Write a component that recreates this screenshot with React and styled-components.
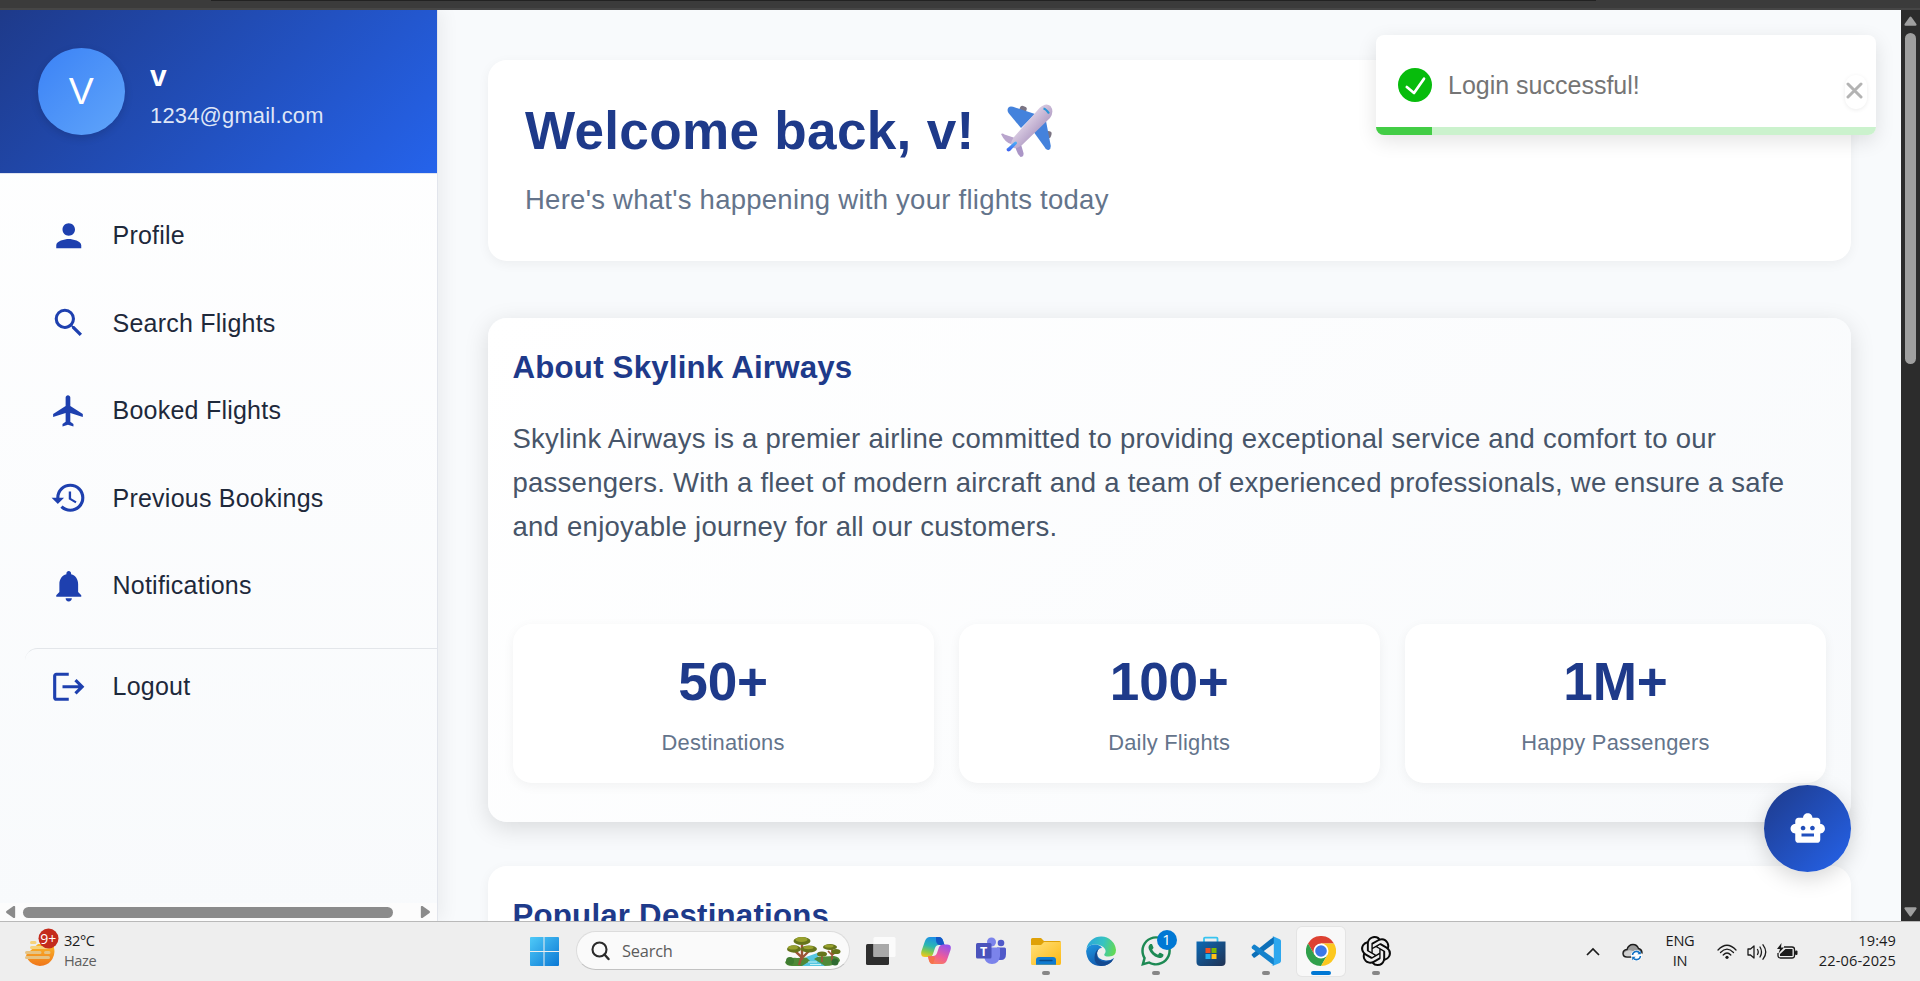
import React from "react";
import styled, { createGlobalStyle } from "styled-components";
import { MdPerson, MdSearch, MdHistory, MdNotifications, MdSmartToy } from "react-icons/md";
import { FaWhatsapp } from "react-icons/fa";

const Global = createGlobalStyle`
  *, *::before, *::after { box-sizing: border-box; }
  body { margin: 0; overflow: hidden; font-family: "Liberation Sans", Arial, sans-serif; }
  h1, h2, p { margin: 0; }
  svg { display: block; flex: none; }
`;

const Screen = styled.div`
  display: flex;
  flex-direction: column;
  width: 1920px;
  height: 981px;
  overflow: hidden;
  position: relative;
`;

const BrowserEdge = styled.div`
  height: 10px;
  flex: none;
  background: linear-gradient(#3b3b3b 0 8px, #464646 8px);
  &::before {
    content: "";
    display: block;
    width: 1385px;
    height: 1px;
    margin-left: 211px;
    background: #222;
  }
`;

const Page = styled.div`
  display: flex;
  height: 911px;
  flex: none;
  overflow: hidden;
  background: #f8fafc;
`;

/* ---------- sidebar ---------- */

const Sidebar = styled.aside`
  width: 438px;
  flex: none;
  display: flex;
  flex-direction: column;
  border-right: 1px solid #e2e5ec;
  background: linear-gradient(180deg, #ffffff 0%, #f8fafc 100%);
  box-shadow: 6px 0 16px rgba(0, 0, 0, 0.05);
  overflow: hidden;
  clip-path: inset(0 -30px 0 0);
`;

const UserHeader = styled.div`
  display: flex;
  align-items: center;
  gap: 25px;
  height: 163.5px;
  flex: none;
  padding: 0 37.5px;
  border-bottom: 1px solid #dfe3f0;
  background: linear-gradient(135deg, #1e3a8a 0%, #2563eb 100%);
`;

const Avatar = styled.div`
  width: 87.5px;
  height: 87.5px;
  flex: none;
  border-radius: 50%;
  display: flex;
  align-items: center;
  justify-content: center;
  color: #fff;
  font-size: 37.5px;
  background: linear-gradient(135deg, #3b82f6, #60a5fa);
  box-shadow: 0 3px 9px rgba(0, 0, 0, 0.14);
`;

const UserText = styled.div`
  color: #fff;
`;

const UserName = styled.div`
  font-size: 30px;
  line-height: 48px;
  font-weight: 700;
`;

const UserMail = styled.div`
  font-size: 21.875px;
  line-height: 31.3px;
  letter-spacing: 0.01071em;
  color: #dfe6f7;
`;

const NavList = styled.nav`
  padding: 24.5px 0 0 25px;
  flex: 1;
`;

const NavItem = styled.div`
  display: flex;
  align-items: center;
  width: 430px;
  height: ${(p) => (p.$divided ? 76 : 75)}px;
  margin-top: ${(p) => (p.$divided ? 25 : 0)}px;
  margin-bottom: ${(p) => (p.$last ? 0 : 12.5)}px;
  padding-left: 25px;
  border-radius: 12.5px;
  border-top: ${(p) => (p.$divided ? "1px solid #e3e6ea" : "none")};
  color: #1e40af;
`;

const NavIcon = styled.span`
  width: 62.5px;
  flex: none;
`;

const NavLabel = styled.span`
  font-size: 25px;
  letter-spacing: 0.00938em;
  color: #1e293b;
`;

const HScroll = styled.div`
  display: flex;
  align-items: center;
  height: 18px;
  flex: none;
  padding: 0 5px 0 4px;
  background: #fcfcfc;
`;

const HThumb = styled.div`
  width: 370px;
  height: 11px;
  margin: 0 auto 0 6px;
  border-radius: 6px;
  background: #8b8b8b;
`;

/* ---------- main ---------- */

const Main = styled.main`
  flex: 1;
  padding: 50px 50px 50px 49.5px;
  display: flex;
  flex-direction: column;
`;

const WelcomeCard = styled.section`
  flex: none;
  height: 201px;
  margin-bottom: 56.5px;
  padding: 37.5px;
  border-radius: 18.75px;
  background: #fff;
  box-shadow: 0 3px 12px rgba(0, 0, 0, 0.05);
`;

const Title = styled.h1`
  display: flex;
  align-items: flex-start;
  font-size: 53.125px;
  line-height: 65.6px;
  letter-spacing: 0.3px;
  color: #1e3a8a;
  margin-bottom: 12.5px;
  svg { margin: 6px 0 0 25px; }
`;

const Subtitle = styled.p`
  font-size: 27.5px;
  line-height: 1.736;
  letter-spacing: 0.00938em;
  color: #64748b;
`;

const SectionCard = styled.section`
  flex: none;
  height: ${(p) => p.$height}px;
  margin-bottom: 43.5px;
  padding: 25px 25px 37.5px;
  border-radius: 18.75px;
  background: ${(p) => (p.$raised ? "linear-gradient(135deg, #ffffff 0%, #f8fafc 100%)" : "#fff")};
  box-shadow: ${(p) => (p.$raised ? "0 6px 24px rgba(0,0,0,0.13)" : "0 3px 12px rgba(0,0,0,0.05)")};
`;

const SectionTitle = styled.h2`
  font-size: 31.25px;
  line-height: 50px;
  letter-spacing: 0.2px;
  color: #1e3a8a;
`;

const Body = styled.p`
  margin: 24.5px 0 75px;
  font-size: 27.5px;
  line-height: 44px;
  letter-spacing: 0.00938em;
  color: #475569;
`;

const Stats = styled.div`
  display: grid;
  grid-template-columns: repeat(3, 1fr);
  gap: 25px;
`;

const Stat = styled.div`
  height: 159.4px;
  padding: 25px;
  text-align: center;
  border-radius: 18.75px;
  background: #fff;
  box-shadow: 0 3px 12px rgba(0, 0, 0, 0.05);
`;

const StatValue = styled.div`
  font-size: 53.125px;
  line-height: 65.6px;
  letter-spacing: -0.2px;
  font-weight: 700;
  color: #1e3a8a;
  margin-bottom: 12.5px;
`;

const StatLabel = styled.div`
  font-size: 21.875px;
  line-height: 31.3px;
  letter-spacing: 0.01071em;
  color: #64748b;
`;

const VScroll = styled.div`
  width: 19px;
  flex: none;
  display: flex;
  flex-direction: column;
  align-items: center;
  padding: 6px 0 4px;
  background: #2c2c2c;
`;

const VThumb = styled.div`
  width: 11px;
  height: 331px;
  margin: 7px 0 auto;
  border-radius: 6px;
  background: #9f9f9f;
`;

/* ---------- overlays ---------- */

const Toast = styled.div`
  position: absolute;
  left: 1376px;
  top: 35px;
  width: 500px;
  height: 100px;
  display: flex;
  flex-direction: column;
  border-radius: 8px;
  background: #fff;
  box-shadow: 0 6px 20px rgba(0, 0, 0, 0.11);
  overflow: hidden;
`;

const ToastRow = styled.div`
  flex: 1;
  display: flex;
  align-items: center;
  gap: 16px;
  padding: 8px 9px 0 22px;
  font-size: 25px;
  color: #757575;
`;

const CloseButton = styled.span`
  width: 22px;
  height: 34px;
  margin: 14px 0 0 auto;
  display: flex;
  align-items: center;
  padding: 0 0 3px 1px;
  border-radius: 11px;
  box-shadow: 0 1px 4px rgba(0, 0, 0, 0.08);
`;

const ToastProgress = styled.div`
  height: 8px;
  background: #cbf2cd;
  &::before {
    content: "";
    display: block;
    width: 56px;
    height: 8px;
    background: #43cd46;
  }
`;

const ChatButton = styled.div`
  position: absolute;
  left: 1763.5px;
  top: 784.5px;
  width: 87.5px;
  height: 87.5px;
  border-radius: 50%;
  display: flex;
  align-items: center;
  justify-content: center;
  color: #fff;
  background: linear-gradient(135deg, #1e3a8a, #2563eb);
  box-shadow: 0 6px 22px rgba(0, 0, 0, 0.17);
`;

/* ---------- taskbar ---------- */

const Taskbar = styled.footer`
  height: 60px;
  flex: none;
  display: flex;
  align-items: stretch;
  border-top: 1px solid #b9b9b9;
  background: #eeeeee;
  color: #1b1b1b;
  font-family: "Open Sans", "Noto Sans", sans-serif;
  font-size: 14.6px;
  line-height: 20px;
`;

const Weather = styled.div`
  width: 516px;
  display: flex;
  padding: 4px 0 0 24px;
  gap: 4px;
`;

const WeatherText = styled.div`
  padding-top: 4px;
  letter-spacing: -0.4px;
  span { display: block; color: #5f5f5f; }
`;

const Slot = styled.div`
  position: relative;
  width: 55px;
  display: flex;
  justify-content: center;
  padding-top: 14px;
`;

const ActiveTile = styled(Slot)`
  width: 48px;
  height: 49px;
  margin: 5px 3.5px 0;
  padding-top: 9px;
  border-radius: 5px;
  background: #f8f8f8;
  box-shadow: 0 0 0 1px #e4e4e4;
`;

const ChatSlot = styled(Slot)`
  padding-top: 12px;
  color: #1d8a54;
`;

const Indicator = styled.span`
  position: absolute;
  bottom: ${(p) => (p.$active ? 1 : 6)}px;
  width: ${(p) => (p.$active ? 20 : 8)}px;
  height: 4px;
  border-radius: 2px;
  background: ${(p) => (p.$active ? "#0078d4" : "#868686")};
`;

const CountBadge = styled.span`
  position: absolute;
  left: 28px;
  top: 8px;
  width: 20px;
  height: 20px;
  border-radius: 50%;
  background: #0078d4;
  color: #fff;
  text-align: center;
  font-size: 15px;
  line-height: 19px;
`;

const SearchPill = styled.div`
  width: 274px;
  height: 39px;
  margin: 9px 3.5px 0 5px;
  display: flex;
  align-items: center;
  padding: 0 8px 0 14px;
  border: 1px solid #dcdcdc;
  border-bottom-color: #c2c2c2;
  border-radius: 20px;
  background: #fafafa;
  color: #5c5c5c;
  font-size: 16.4px;
  letter-spacing: -0.2px;
  span { margin: 1px auto 0 12px; }
`;

const Tray = styled.div`
  flex: 1;
  display: flex;
  align-items: center;
  justify-content: flex-end;
  padding-right: 24px;
`;

const TrayText = styled.div`
  width: ${(p) => p.$width}px;
  margin-left: ${(p) => p.$gap}px;
  padding-bottom: 4px;
  text-align: ${(p) => p.$align};
  letter-spacing: ${(p) => p.$track || 0}px;
  white-space: nowrap;
`;

const TrayIcon = styled.span`
  margin-left: ${(p) => p.$gap}px;
`;

/* ---------- drawings ---------- */

const Airplane = () => (
  <svg width="54" height="54" viewBox="0 0 54 54">
    <defs>
      <linearGradient id="fus" x1="0" y1="0" x2="1" y2="1">
        <stop offset="0.35" stopColor="#dccfe4" />
        <stop offset="0.65" stopColor="#b39fc6" />
      </linearGradient>
      <linearGradient id="tail" x1="0" y1="0" x2="0" y2="1">
        <stop offset="0" stopColor="#4cb4f8" />
        <stop offset="1" stopColor="#3d5df0" />
      </linearGradient>
    </defs>
    <rect x="20" y="2" width="7" height="6" rx="2.5" fill="#7b7483" transform="rotate(20 23 4)" />
    <rect x="46" y="27" width="5.5" height="7" rx="2.5" fill="#7b7483" transform="rotate(15 48 30)" />
    <path d="M8.5 3.4 Q10 2 13 2.8 L35 10 L21 24 L8.5 9 Q6.600 6 8.5 3.400Z" fill="#4482dc" />
    <path d="M46 17 L50.800 42 Q51 45 48.500 46 Q46 46.500 44.500 43 L33 27Z" fill="#4482dc" />
    <path d="M1 30 Q2.500 29 4.500 30.500 L15 34 L11 40 Q5 38.500 1 30Z" fill="#b9a5cd" />
    <path d="M15 42 L20 37 L23.500 49 Q24 53 20.500 53 Q17 50 15 42Z" fill="#ab96c7" />
    <path d="M39.500 4 Q46 -2 50.500 2 Q54.500 7.500 50 14 L22 41 Q15 46.500 12.500 43 Q9 40 14 33Z" fill="url(#fus)" />
    <path d="M43.500 4.500 Q46 5 49 9.500" stroke="#2794d8" strokeWidth="2.200" fill="none" />
    <path d="M14.500 38 Q17 36.500 17 39.500 L10 47 Q6.500 48.500 6.500 45Z" fill="url(#tail)" />
  </svg>
);

const PlaneIcon = () => (
  <svg width="37.5" height="37.5" viewBox="0 0 24 24" fill="currentColor">
    <path d="M21 16v-2l-8-5V3.500c0-.83-.67-1.500-1.500-1.500S10 2.670 10 3.500V9l-8 5v2l8-2.500V19l-2 1.500V22l3.500-1 3.500 1v-1.500L13 19v-5.500l8 2.500z" />
  </svg>
);

const LogoutIcon = () => (
  <svg width="37.5" height="37.5" viewBox="0 0 24 24" fill="currentColor">
    <path d="M17 7l-1.410 1.410L18.170 11H8v2h10.170l-2.580 2.580L17 17l5-5zM4 5h8V3H4c-1.100 0-2 .9-2 2v14c0 1.100.9 2 2 2h8v-2H4z" />
  </svg>
);

const TURN = { up: 0, right: 90, down: 180, left: 270 };

const ArrowSvg = styled.svg`
  transform: rotate(${(p) => TURN[p.$dir]}deg);
`;

const Arrow = ({ dir }) => (
  <ArrowSvg $dir={dir} width="13" height="10" viewBox="0 0 13 10">
    <path
      d="M5.600 1 Q6.500 -.2 7.400 1 L12.400 8 Q13 9.800 11.400 9.800 H1.600 Q0 9.800 .6 8Z"
      fill={dir === "up" || dir === "down" ? "#9f9f9f" : "#8b8b8b"}
    />
  </ArrowSvg>
);

const CheckMark = () => (
  <svg width="34" height="34" viewBox="0 0 34 34">
    <circle cx="17" cy="17" r="17" fill="#07bc0c" />
    <path d="M8.800 19 L16 25 L26 10.700" fill="none" stroke="#fff" strokeWidth="2.700" strokeLinecap="round" strokeLinejoin="round" />
  </svg>
);

const Cross = () => (
  <svg width="17" height="17" viewBox="0 0 17 17">
    <path d="M2 2 L15 15 M15 2 L2 15" stroke="#b3b3b3" strokeWidth="3" strokeLinecap="round" />
  </svg>
);

const WeatherIcon = () => (
  <svg width="36" height="40" viewBox="0 0 36 40">
    <defs>
      <linearGradient id="sun" x1="0" y1="0" x2="0" y2="1">
        <stop offset="0" stopColor="#fbb829" />
        <stop offset="1" stopColor="#f0761a" />
      </linearGradient>
    </defs>
    <path d="M2 29 A14 14 0 0 0 30 22 V18 H14 L6 25Z" fill="url(#sun)" />
    <g stroke="#f6d27b" strokeWidth="3" strokeLinecap="round">
      <path d="M7.500 16.500H11M7.500 21.500H24" />
      <path d="M2.500 26.500H16M21.500 26.500H25M2.500 31.500H24.500" stroke="#e6c383" />
    </g>
    <circle cx="24.500" cy="12.500" r="10" fill="#c42b1c" />
    <text x="24.300" y="17.500" textAnchor="middle" fontSize="14" fill="#fff">9+</text>
  </svg>
);

const StartIcon = () => (
  <svg width="30" height="30" viewBox="0 0 30 30">
    <defs>
      <linearGradient id="win" x1="0" y1="0" x2="1" y2="1" gradientUnits="objectBoundingBox">
        <stop offset="0" stopColor="#4fcaf8" />
        <stop offset="1" stopColor="#0a78d4" />
      </linearGradient>
    </defs>
    <path d="M1 2a1 1 0 0 1 1-1h12.500v14H1zM15.500 1H29a1 1 0 0 1 1 1v13H15.500zM1 16h13.500v14H2a1 1 0 0 1-1-1zM15.500 16H30v13a1 1 0 0 1-1 1H15.500z" fill="url(#win)" />
  </svg>
);

const Lens = () => (
  <svg width="19" height="20" viewBox="0 0 19 20">
    <circle cx="8.500" cy="8.500" r="7" fill="none" stroke="#2a2a2a" strokeWidth="2.100" />
    <path d="M13.500 13.500 L17.500 18" stroke="#2a2a2a" strokeWidth="2.400" strokeLinecap="round" />
  </svg>
);

const Landscape = () => (
  <svg width="57" height="32" viewBox="0 0 57 32">
    <path d="M1 27 Q6 22 13 23 L50 21 Q56 22 56 26 Q52 31 40 31 H8 Q2 31 1 27Z" fill="#4f8a38" />
    <path d="M22 22 L36 17 L35 21 L30 24 L41 31 H18 L26 26Z" fill="#55c6e0" />
    <path d="M24 27 H33 M26 29.500 H37" stroke="#c2f0f5" strokeWidth="1" />
    <path d="M15 30 L17.500 22 L10 15 M18 23 L25 16 M18 25 L18 10" stroke="#9c5437" strokeWidth="2.400" fill="none" />
    <path d="M38 27 L38 20 M48 26 L48 14 M48 20 L53 16 M48 20 L44 16" stroke="#9c5437" strokeWidth="1.700" fill="none" />
    <g fill="#65741b">
      <ellipse cx="10" cy="14" rx="7" ry="3.700" />
      <ellipse cx="18" cy="6" rx="8.500" ry="4" />
      <ellipse cx="25" cy="14" rx="8" ry="3.500" />
      <ellipse cx="38" cy="19" rx="5" ry="2.600" />
      <ellipse cx="46" cy="12" rx="7" ry="3" />
      <ellipse cx="52" cy="16.500" rx="4.500" ry="2.600" />
    </g>
    <g fill="#98a12d">
      <ellipse cx="9" cy="12.500" rx="5" ry="2" />
      <ellipse cx="17.500" cy="4.500" rx="6" ry="2.500" />
      <ellipse cx="24.500" cy="12.500" rx="5" ry="1.700" />
      <ellipse cx="45" cy="11" rx="4.500" ry="1.500" />
    </g>
    <circle cx="6" cy="26" r="4" fill="#3f7c31" />
    <circle cx="51" cy="27" r="3.500" fill="#2f6a31" />
  </svg>
);

const TaskViewIcon = () => (
  <svg width="30" height="30" viewBox="0 0 30 30">
    <rect x="0" y="8" width="23" height="21" rx="1.500" fill="#2e2e2e" />
    <rect x="7.500" y="1" width="22" height="20" rx="1.500" fill="#fff" fillOpacity="0.78" />
    <rect x="7.500" y="8" width="15.500" height="13" fill="#a9a9a9" />
  </svg>
);

const CopilotIcon = () => (
  <svg width="30" height="30" viewBox="0 0 30 30">
    <defs>
      <linearGradient id="cpA" x1="0.500" y1="0" x2="0.200" y2="1">
        <stop offset="0" stopColor="#1b8ee8" />
        <stop offset="0.450" stopColor="#2bb7b0" />
        <stop offset="0.750" stopColor="#8ecb45" />
        <stop offset="1" stopColor="#f4c51c" />
      </linearGradient>
      <linearGradient id="cpB" x1="0.700" y1="0" x2="0.200" y2="1">
        <stop offset="0" stopColor="#9a52ea" />
        <stop offset="0.550" stopColor="#ee5b9a" />
        <stop offset="1" stopColor="#fb8350" />
      </linearGradient>
    </defs>
    <path d="M13 1 H18 Q21 1 22 4.500 L23.500 9 H18 Q15 9 14 12 L12 18 Q11 21 8 21 H4 Q-1 21 .5 15 L4 5 Q5.500 1 9 1Z" fill="url(#cpA)" />
    <path d="M15 1 H18 Q21 1 22 4.500 L23.500 9 H19 Q16 9 15 5Z" fill="#1458c6" />
    <path d="M17 28 H12 Q9 28 8 24.500 L7 20 H12 Q15 20 16 17 L18 11 Q19 8.500 22 8.500 H26 Q31 8.500 29.500 14 L26 24 Q24.500 28 21 28Z" fill="url(#cpB)" />
    <path d="M7 20.500 H12 Q14.500 20.500 13.500 23.500 L12 28 Q9 28 8 24.500Z" fill="#f5714b" />
  </svg>
);

const TeamsIcon = () => (
  <svg width="30" height="30" viewBox="0 0 30 30">
    <circle cx="25" cy="7" r="3.300" fill="#5059c9" />
    <circle cx="15.500" cy="6" r="4.500" fill="#7b83eb" />
    <path d="M21 11.500 H28.500 Q30 11.500 30 13 V18 Q30 24 25 24 H21Z" fill="#5059c9" />
    <path d="M8 11.500 H22.500 Q24 11.500 24 13 V20 Q23 28 16 28 Q9 28 8 20Z" fill="#7b83eb" />
    <rect x="0" y="7" width="15.500" height="15.500" rx="1.500" fill="#4b53bc" />
    <text x="7.700" y="19.500" textAnchor="middle" fontSize="12.500" fontWeight="700" fill="#fff">T</text>
  </svg>
);

const FolderIcon = () => (
  <svg width="30" height="30" viewBox="0 0 30 30">
    <defs>
      <linearGradient id="fold" x1="0" y1="0" x2="1" y2="1">
        <stop offset="0" stopColor="#ffe07a" />
        <stop offset="1" stopColor="#fdb913" />
      </linearGradient>
    </defs>
    <path d="M0 3.500 Q0 2 1.500 2 H10 L13 5 H28.500 Q30 5 30 6.500 V12 H0Z" fill="#dfa108" />
    <path d="M0 9 H10 L13 6 H30 V27 Q30 29 28.500 29 H1.500 Q0 29 0 27.500Z" fill="url(#fold)" />
    <path d="M5 28.800 V24 Q5 21 8 21 H22 Q25 21 25 24 V28.800Z" fill="#0f7bd0" />
    <path d="M9 24.500 H21" stroke="#0a4c8c" strokeWidth="1.300" strokeLinecap="round" />
  </svg>
);

const EdgeIcon = () => (
  <svg width="30" height="30" viewBox="0 0 30 30">
    <defs>
      <linearGradient id="edA" x1="0" y1="0.300" x2="1" y2="0.500">
        <stop offset="0" stopColor="#2aa5dc" />
        <stop offset="0.550" stopColor="#36c3c2" />
        <stop offset="1" stopColor="#62d955" />
      </linearGradient>
      <linearGradient id="edB" x1="0" y1="0" x2="0.500" y2="1">
        <stop offset="0" stopColor="#1e96e0" />
        <stop offset="1" stopColor="#1259ad" />
      </linearGradient>
    </defs>
    <path d="M.3 13 A15 15 0 0 1 30 14 Q30 20.500 23 20.500 Q17.500 20.500 18.300 18.200 Q20.500 16 19 13 Q16 8.500 9 8.500 Q3 8.500 .3 13Z" fill="url(#edA)" />
    <path d="M.1 15 Q1 8.500 9 8.500 Q14 8.800 16 12 Q11.500 12 11 17 Q11 24 20 24.500 Q25 24.500 28 22 Q23.500 30 15 30 Q1 29.500 .1 15Z" fill="url(#edB)" />
    <path d="M11 17 Q10.500 25 19 26 Q25 25.500 28.200 22 Q24 30 15 30 Q8 28 8.500 21 Q9 14 14 12.200 Q11.500 13.500 11 17Z" fill="#134a91" />
  </svg>
);

const StoreIcon = () => (
  <svg width="30" height="30" viewBox="0 0 30 30">
    <defs>
      <linearGradient id="store" x1="0" y1="0" x2="1" y2="1">
        <stop offset="0" stopColor="#0c69b4" />
        <stop offset="1" stopColor="#213253" />
      </linearGradient>
    </defs>
    <path d="M8 7 V2.500 Q8 1.700 9 1.700 H20.500 Q21.500 1.700 21.500 2.500 V7" fill="none" stroke="#38c4f0" strokeWidth="1.800" />
    <path d="M.5 5.500 H29.500 V26 Q29.500 30 25.500 30 H4.500 Q.5 30 .5 26Z" fill="url(#store)" />
    <rect x="9.500" y="12" width="5" height="5" fill="#f25022" />
    <rect x="15.500" y="12" width="5" height="5" fill="#7fba00" />
    <rect x="9.500" y="18" width="5" height="5" fill="#1fb1f0" />
    <rect x="15.500" y="18" width="5" height="5" fill="#ffc21a" />
  </svg>
);

const CodeIcon = () => (
  <svg width="30" height="30" viewBox="0 0 30 30">
    <path d="M.5 19 L2.500 21.500 Q3.300 22 4 21.400 L23 7.500 V.5 L1 18Z" fill="#0c6fb8" />
    <path d="M.5 11 L2.500 8.800 Q3.300 8.200 4 8.700 L23 22.500 V29.500 L1 12.500Z" fill="#1482cc" />
    <path d="M22 .3 L28.800 3.200 Q30 3.800 30 5 V25 Q30 26.300 28.800 26.900 L22 29.800 Q21 30 20.500 29.200 Q22.500 30 22.800 28 V2 Q22.500 0 20.500 .8Z" fill="#2da7ee" />
  </svg>
);

const ChromeIcon = () => (
  <svg width="30" height="30" viewBox="0 0 30 30">
    <path d="M2 7.500 A15 15 0 0 1 28 7.500 L15 7.500 L8.500 18.750Z" fill="#dd4132" />
    <path d="M2 7.500 A15 15 0 0 0 15 30 L21.500 18.750 L8.500 18.750Z" fill="#30a04b" />
    <path d="M28 7.500 A15 15 0 0 1 15 30 L21.500 18.750 L15 7.500Z" fill="#fcc81f" />
    <circle cx="15" cy="15" r="7.500" fill="#fff" />
    <circle cx="15" cy="15" r="5.800" fill="#3b78e7" />
  </svg>
);

const KnotIcon = () => (
  <svg width="30" height="30" viewBox="0 0 24 24" fill="#0a0a0a">
    <path d="M22.2819 9.8211a5.9847 5.9847 0 0 0-.5157-4.9108 6.0462 6.0462 0 0 0-6.5098-2.9A6.0651 6.0651 0 0 0 4.9807 4.1818a5.9847 5.9847 0 0 0-3.9977 2.9 6.0462 6.0462 0 0 0 .7427 7.0966 5.98 5.98 0 0 0 .511 4.9107 6.051 6.051 0 0 0 6.5146 2.9001A5.9847 5.9847 0 0 0 13.2599 24a6.0557 6.0557 0 0 0 5.7718-4.2058 5.9894 5.9894 0 0 0 3.9977-2.9001 6.0557 6.0557 0 0 0-.7475-7.0729zm-9.022 12.6081a4.4755 4.4755 0 0 1-2.8764-1.0408l.1419-.0804 4.7783-2.7582a.7948.7948 0 0 0 .3927-.6813v-6.7369l2.02 1.1686a.071.071 0 0 1 .038.052v5.5826a4.504 4.504 0 0 1-4.4945 4.4944zm-9.6607-4.1254a4.4708 4.4708 0 0 1-.5346-3.0137l.142.0852 4.783 2.7582a.7712.7712 0 0 0 .7806 0l5.8428-3.3685v2.3324a.0804.0804 0 0 1-.0332.0615L9.74 19.9502a4.4992 4.4992 0 0 1-6.1408-1.6464zM2.3408 7.8956a4.485 4.485 0 0 1 2.3655-1.9728V11.6a.7664.7664 0 0 0 .3879.6765l5.8144 3.3543-2.0201 1.1685a.0757.0757 0 0 1-.071 0l-4.8303-2.7865A4.504 4.504 0 0 1 2.3408 7.872zm16.5963 3.8558L13.1038 8.364 15.1192 7.2a.0757.0757 0 0 1 .071 0l4.8303 2.7913a4.4944 4.4944 0 0 1-.6765 8.1042v-5.6772a.79.79 0 0 0-.407-.667zm2.0107-3.0231l-.142-.0852-4.7735-2.7818a.7759.7759 0 0 0-.7854 0L9.409 9.2297V6.8974a.0662.0662 0 0 1 .0284-.0615l4.8303-2.7866a4.4992 4.4992 0 0 1 6.6802 4.66zM8.3065 12.863l-2.02-1.1638a.0804.0804 0 0 1-.038-.0567V6.0742a4.4992 4.4992 0 0 1 7.3757-3.4537l-.142.0805L8.704 5.459a.7948.7948 0 0 0-.3927.6813zm1.0976-2.3654l2.602-1.4998 2.6069 1.4998v2.9994l-2.5974 1.4997-2.6067-1.4997Z" />
  </svg>
);

const ChevronUp = () => (
  <svg width="14" height="10" viewBox="0 0 14 10">
    <path d="M1 8 L7 2 L13 8" fill="none" stroke="#1b1b1b" strokeWidth="1.700" />
  </svg>
);

const CloudSync = () => (
  <svg width="21" height="18" viewBox="0 0 21 18">
    <path d="M5 14 Q1 14 1 10.500 Q1 7 5 6.500 Q6.500 1.500 11 1.500 Q15 1.500 16.500 5.500 Q20 6.500 20 10 L10 14Z" fill="#9a9a9a" stroke="#1b1b1b" strokeWidth="1.400" />
    <path d="M2 10 Q6 5 13 9 L9 13.300 H5 Q2 13 2 10Z" fill="#d0d0d0" />
    <circle cx="14.500" cy="12.500" r="5.500" fill="#fff" />
    <path d="M10.500 12 A4 4 0 0 1 18 10.500 M18.500 13 A4 4 0 0 1 11 14.500" fill="none" stroke="#1372c4" strokeWidth="1.500" />
    <path d="M18.800 7.800 V11.200 H15.400Z M10.200 17.200 V13.800 H13.600Z" fill="#1372c4" />
  </svg>
);

const WifiIcon = () => (
  <svg width="20" height="16" viewBox="0 0 20 16" fill="none" stroke="#1b1b1b" strokeWidth="1.300" strokeLinecap="round">
    <path d="M1 6 Q10 -3.500 19 6 M3.500 8.500 Q10 1.800 16.500 8.500 M6.200 11 Q10 7 13.800 11" />
    <circle cx="10" cy="13.300" r="1.600" fill="#1b1b1b" stroke="none" />
  </svg>
);

const VolumeIcon = () => (
  <svg width="20" height="18" viewBox="0 0 20 18" fill="none" stroke="#1b1b1b" strokeWidth="1.300" strokeLinecap="round" strokeLinejoin="round">
    <path d="M1 6 H3.500 L7 3 V15 L3.500 12 H1Z M10.500 6.500 Q12 9 10.500 11.500 M13 4 Q16 9 13 14 M16 1.800 Q21.500 9 16 16.200" />
  </svg>
);

const BatteryIcon = () => (
  <svg width="21" height="17" viewBox="0 0 21 17">
    <path d="M7 4 H15 Q17.500 4 17.500 6.500 V12.500 Q17.500 15 15 15 H3.500 Q1 15 1 12.500 V10" fill="none" stroke="#1b1b1b" strokeWidth="1.300" />
    <path d="M8 6 H15.500 V13 H3 V11 L8.500 6Z" fill="#1b1b1b" />
    <rect x="18" y="7.500" width="2.500" height="4.500" rx="1" fill="#1b1b1b" />
    <path d="M4.500 0 L0 6 H3 L1.500 10.500 L7 4.500 H4Z" fill="#1b1b1b" />
  </svg>
);

/* ---------- data ---------- */

const NAV = [
  { label: "Profile", icon: <MdPerson size={37.5} /> },
  { label: "Search Flights", icon: <MdSearch size={37.5} /> },
  { label: "Booked Flights", icon: <PlaneIcon /> },
  { label: "Previous Bookings", icon: <MdHistory size={37.5} /> },
  { label: "Notifications", icon: <MdNotifications size={37.5} />, last: true },
  { label: "Logout", icon: <LogoutIcon />, divided: true },
];

const STATS = [
  ["50+", "Destinations"],
  ["100+", "Daily Flights"],
  ["1M+", "Happy Passengers"],
];

export default function App() {
  return (
    <Screen>
      <Global />
      <BrowserEdge />
      <Page>
        <Sidebar>
          <UserHeader>
            <Avatar>V</Avatar>
            <UserText>
              <UserName>v</UserName>
              <UserMail>1234@gmail.com</UserMail>
            </UserText>
          </UserHeader>
          <NavList>
            {NAV.map((n) => (
              <NavItem key={n.label} $last={n.last} $divided={n.divided}>
                <NavIcon>{n.icon}</NavIcon>
                <NavLabel>{n.label}</NavLabel>
              </NavItem>
            ))}
          </NavList>
          <HScroll>
            <Arrow dir="left" />
            <HThumb />
            <Arrow dir="right" />
          </HScroll>
        </Sidebar>
        <Main>
          <WelcomeCard>
            <Title>
              Welcome back, v!
              <Airplane />
            </Title>
            <Subtitle>Here's what's happening with your flights today</Subtitle>
          </WelcomeCard>
          <SectionCard $raised $height={504.5}>
            <SectionTitle>About Skylink Airways</SectionTitle>
            <Body>
              Skylink Airways is a premier airline committed to providing exceptional service and comfort to our
              passengers. With a fleet of modern aircraft and a team of experienced professionals, we ensure a safe
              and enjoyable journey for all our customers.
            </Body>
            <Stats>
              {STATS.map(([value, label]) => (
                <Stat key={label}>
                  <StatValue>{value}</StatValue>
                  <StatLabel>{label}</StatLabel>
                </Stat>
              ))}
            </Stats>
          </SectionCard>
          <SectionCard $height={400}>
            <SectionTitle>Popular Destinations</SectionTitle>
          </SectionCard>
        </Main>
        <VScroll>
          <Arrow dir="up" />
          <VThumb />
          <Arrow dir="down" />
        </VScroll>
      </Page>

      <Taskbar>
        <Weather>
          <WeatherIcon />
          <WeatherText>
            32°C
            <span>Haze</span>
          </WeatherText>
        </Weather>
        <Slot><StartIcon /></Slot>
        <SearchPill>
          <Lens />
          <span>Search</span>
          <Landscape />
        </SearchPill>
        <Slot><TaskViewIcon /></Slot>
        <Slot><CopilotIcon /></Slot>
        <Slot><TeamsIcon /></Slot>
        <Slot><FolderIcon /><Indicator /></Slot>
        <Slot><EdgeIcon /></Slot>
        <ChatSlot>
          <FaWhatsapp size={34} />
          <CountBadge>1</CountBadge>
          <Indicator />
        </ChatSlot>
        <Slot><StoreIcon /></Slot>
        <Slot><CodeIcon /><Indicator /></Slot>
        <ActiveTile><ChromeIcon /><Indicator $active /></ActiveTile>
        <Slot><KnotIcon /><Indicator /></Slot>
        <Tray>
          <TrayIcon $gap={0}><ChevronUp /></TrayIcon>
          <TrayIcon $gap={22}><CloudSync /></TrayIcon>
          <TrayText $width={40} $gap={17} $align="center" $track={-0.3}>
            <div>ENG</div>
            <div>IN</div>
          </TrayText>
          <TrayIcon $gap={17}><WifiIcon /></TrayIcon>
          <TrayIcon $gap={10}><VolumeIcon /></TrayIcon>
          <TrayIcon $gap={10}><BatteryIcon /></TrayIcon>
          <TrayText $width={80} $gap={18} $align="right" $track={0.1}>
            <div>19:49</div>
            <div>22-06-2025</div>
          </TrayText>
        </Tray>
      </Taskbar>

      <ChatButton><MdSmartToy size={37.5} /></ChatButton>
      <Toast>
        <ToastRow>
          <CheckMark />
          <span>Login successful!</span>
          <CloseButton><Cross /></CloseButton>
        </ToastRow>
        <ToastProgress />
      </Toast>
    </Screen>
  );
}
